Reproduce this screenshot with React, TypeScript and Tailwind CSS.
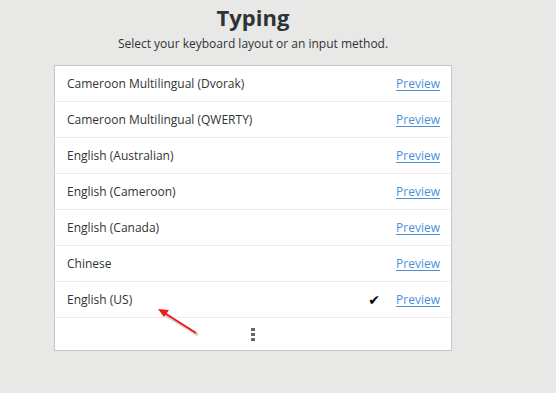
import React from 'react';

const layouts = [
  'Cameroon Multilingual (Dvorak)',
  'Cameroon Multilingual (QWERTY)',
  'English (Australian)',
  'English (Cameroon)',
  'English (Canada)',
  'Chinese',
  'English (US)',
];

const Row: React.FC<{ name: string; active?: boolean }> = ({ name, active }) => (
  <div className="h-9 flex items-center justify-between pl-3 pr-[11px] border-b border-[#ededed]">
    <span className="text-[12px] text-[#2e3436]">{name}</span>
    <div className="flex items-center gap-[16px]">
      {active && <span className="text-[14px] leading-none text-black">✔</span>}
      <span className="text-[12px] text-[#4a90d9] underline underline-offset-2">Preview</span>
    </div>
  </div>
);

export default function App() {
  return (
    <div
      className="relative w-[556px] h-[393px] bg-[#e8e8e7] overflow-hidden"
      style={{ fontFamily: '"Open Sans", "DejaVu Sans", sans-serif' }}
    >
      <div className="ml-[54px] w-[398px] flex flex-col items-center">
        <h1 className="mt-[3px] text-[22px] font-bold text-[#2e3436] leading-[28px]">Typing</h1>
        <p className="mt-[5px] text-[12px] text-[#2e3436] leading-[16px]">
          Select your keyboard layout or an input method.
        </p>
        <div className="mt-[13px] w-full bg-white border border-[#c7c7c5]">
          {layouts.map((l) => (
            <Row key={l} name={l} active={l === 'English (US)'} />
          ))}
          <div className="h-[32px] flex items-center justify-center">
            <div className="flex flex-col gap-[2px]">
              <span className="w-[4px] h-[3px] bg-[#666]" />
              <span className="w-[4px] h-[3px] bg-[#666]" />
              <span className="w-[4px] h-[3px] bg-[#666]" />
            </div>
          </div>
        </div>
      </div>

      <svg className="absolute left-0 top-0" width="556" height="393" viewBox="0 0 556 393">
        <line x1="198" y1="335" x2="164" y2="314" stroke="#000" strokeOpacity="0.18" strokeWidth="3" />
        <line x1="196" y1="333" x2="163" y2="312" stroke="#f01818" strokeWidth="2" />
        <polygon points="158,309 169,310 164,317" fill="#f01818" />
      </svg>
    </div>
  );
}
